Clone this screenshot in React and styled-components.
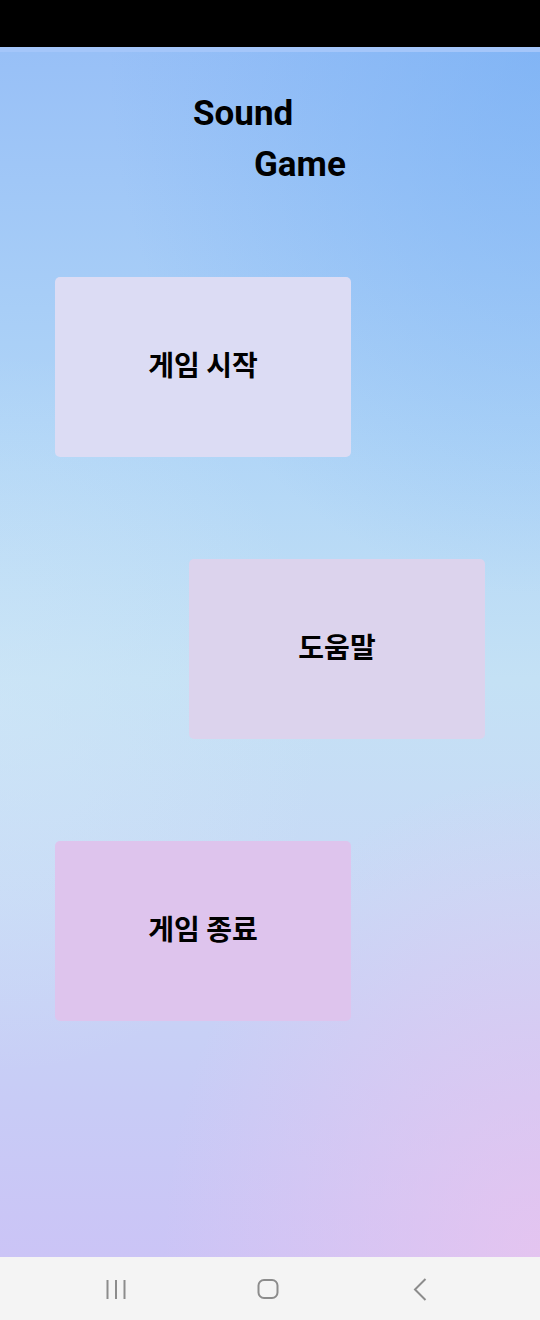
import styled, { createGlobalStyle } from "styled-components";

const GlobalStyle = createGlobalStyle`
  html, body {
    margin: 0;
    padding: 0;
  }
  body {
    font-family: Roboto, "Noto Sans CJK KR", sans-serif;
  }
`;

const Screen = styled.div`
  width: 540px;
  height: 1320px;
  display: flex;
  flex-direction: column;
  overflow: hidden;
`;

const StatusBar = styled.div`
  height: 47px;
  background: #000;
  flex-shrink: 0;
`;

const Content = styled.div`
  flex: 1;
  display: flex;
  flex-direction: column;
  background:
    radial-gradient(ellipse 70% 40% at 100% 100%, rgba(236, 196, 238, 0.75), rgba(236, 196, 238, 0) 100%),
    radial-gradient(ellipse 80% 45% at 100% 0%, rgba(112, 172, 244, 0.55), rgba(112, 172, 244, 0) 100%),
    radial-gradient(ellipse 60% 30% at 0% 55%, rgba(210, 232, 248, 0.5), rgba(210, 232, 248, 0) 100%),
    linear-gradient(180deg, #98c0f7 0%, #b0d5f7 32%, #c4e1f5 52%, #c8d9f6 70%, #c8cbf6 88%, #cbc4f6 100%);
  border-top: 5px solid #a4c6fa;
`;

const Title = styled.div`
  display: flex;
  flex-direction: column;
  padding-top: 36px;
  margin-bottom: 87px;
`;

const TitleLine = styled.span`
  font-family: Roboto, sans-serif;
  font-weight: 700;
  font-size: 35px;
  line-height: 51px;
  color: #000;
  padding-left: ${(p) => p.$indent}px;
`;

const Menu = styled.div`
  display: flex;
  flex-direction: column;
  gap: 102px;
`;

const MenuButton = styled.button`
  width: 296px;
  height: 180px;
  margin-left: ${(p) => p.$offset}px;
  border: none;
  border-radius: 5px;
  background: ${(p) => p.$bg};
  font-family: "Noto Sans CJK KR", sans-serif;
  font-weight: 700;
  font-size: 28px;
  color: #000;
  display: flex;
  align-items: center;
  justify-content: center;
  padding: 0 0 6px;
`;

const NavBar = styled.div`
  height: 63px;
  flex-shrink: 0;
  background: #f4f4f4;
  display: flex;
  align-items: center;
  gap: 128px;
  padding-left: 104px;
`;

const NavIcon = styled.svg`
  width: 24px;
  height: 24px;
  color: #8c8c8c;
  flex-shrink: 0;
`;

const buttons = [
  { label: "게임 시작", offset: 55, bg: "#dcdcf4" },
  { label: "도움말", offset: 189, bg: "#dcd3ed" },
  { label: "게임 종료", offset: 55, bg: "#dec4ed" },
];

const App = () => {
  return (
    <Screen>
      <GlobalStyle />
      <StatusBar />
      <Content>
        <Title>
          <TitleLine $indent={193}>Sound</TitleLine>
          <TitleLine $indent={254}>Game</TitleLine>
        </Title>
        <Menu>
          {buttons.map((b) => (
            <MenuButton key={b.label} $offset={b.offset} $bg={b.bg}>
              {b.label}
            </MenuButton>
          ))}
        </Menu>
      </Content>
      <NavBar>
        <NavIcon viewBox="0 0 24 24" fill="none" stroke="currentColor" strokeWidth="2">
          <path d="M3.5 3v19M12 3v19M20.5 3v19" />
        </NavIcon>
        <NavIcon viewBox="0 0 24 24" fill="none" stroke="currentColor" strokeWidth="2">
          <rect x="2.5" y="3" width="19" height="18" rx="5.5" />
        </NavIcon>
        <NavIcon viewBox="0 0 24 24" fill="none" stroke="currentColor" strokeWidth="2">
          <path d="M17.5 2L7 12.5 17.5 23" />
        </NavIcon>
      </NavBar>
    </Screen>
  );
};

export default App;
